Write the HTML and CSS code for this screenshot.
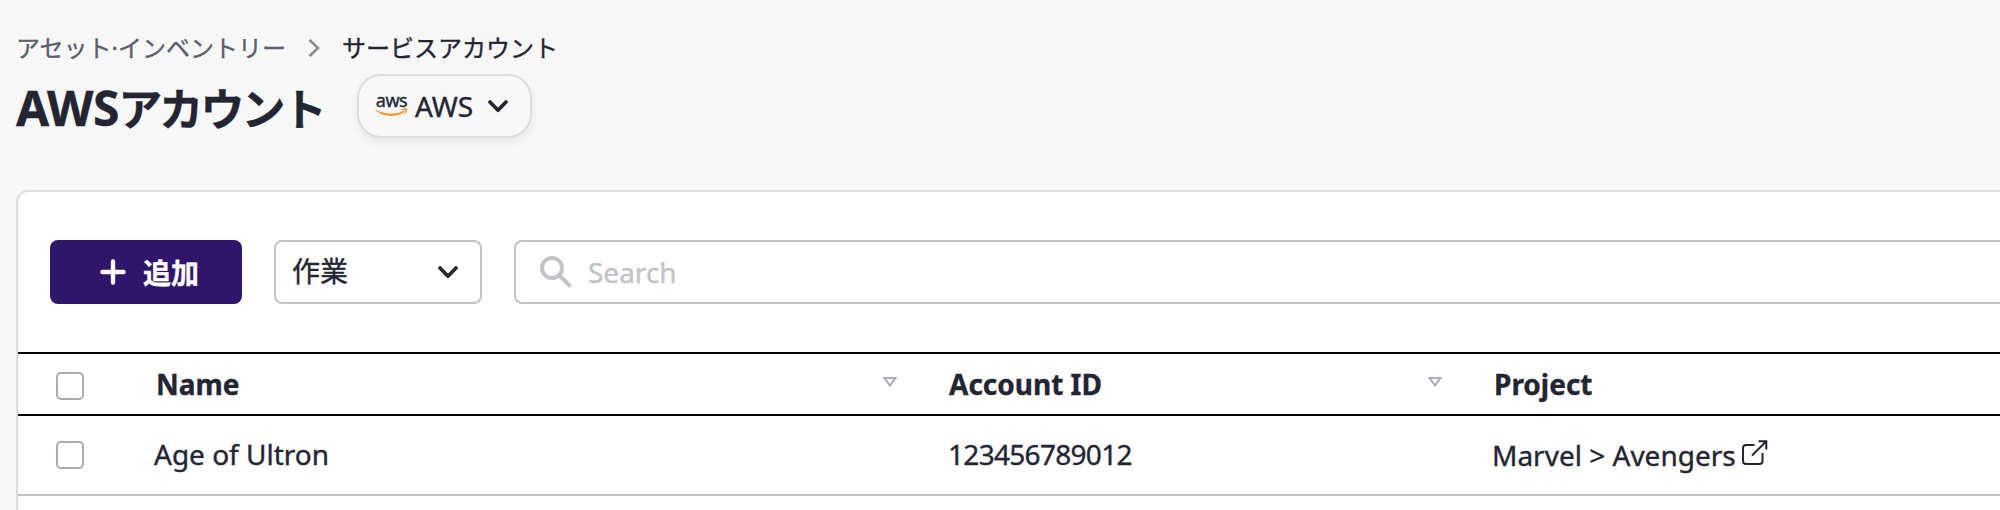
FILE: index.html
```html
<!DOCTYPE html>
<html lang="ja">
<head>
<meta charset="utf-8">
<title>AWSアカウント</title>
<link rel="stylesheet" href="styles.css">
</head>
<body>
<main class="page">
  <nav class="breadcrumb">
    <span class="crumb">アセット·インベントリー</span>
    <svg class="crumb-arrow" width="12" height="18" viewBox="0 0 12 18"><path d="M1.500 1l8.500 8-8.500 8"/></svg>
    <span class="crumb current">サービスアカウント</span>
  </nav>
  <header class="heading">
    <h1 class="title"><span class="title-latin">AWS</span><span class="title-kana">アカウント</span></h1>
    <button class="provider">
      <span class="aws-logo">
        <span class="aws-word">aws</span>
        <svg class="aws-smile" width="33" height="9" viewBox="0 0 33 9"><path d="M.4 1.500Q8 5.500 15.500 5.700 22.500 5.800 28.200 3.100 29.600 2.500 29.800 3.700 24 8 15.600 8 7 8 .4 2.300Z"/><path d="M26 1.300Q31.500-.6 32.400 1 32.500 4 29.800 6.700 29.200 6.800 29.400 6.200 30.800 3 30.300 2.100 29.300 1.500 26 1.900Z"/></svg>
      </span>
      <span class="provider-name">AWS</span>
      <svg class="chevron" width="20" height="13" viewBox="0 0 20 13"><path d="M2 2l8 8.300L18 2"/></svg>
    </button>
  </header>
  <section class="card">
    <div class="toolbar">
      <button class="add"><svg class="plus" width="26" height="26" viewBox="0 0 26 26"><path d="M13 2.500v21M2.500 13h21"/></svg><span>追加</span></button>
      <button class="select"><span class="select-label">作業</span><svg class="chevron" width="20" height="13" viewBox="0 0 20 13"><path d="M2 2l8 8.300L18 2"/></svg></button>
      <div class="search"><svg class="search-icon" width="32" height="32" viewBox="0 0 32 32"><circle cx="12" cy="12" r="10"/><path d="M19 19l11.500 11.500"/></svg><span class="placeholder">Search</span></div>
    </div>
    <div class="row head">
      <div class="check-cell"><span class="checkbox"></span></div>
      <div class="cell"><span>Name</span><svg class="sort" width="14" height="10" viewBox="0 0 14 10"><path d="M1.500 1h11L7 8.500z"/></svg></div>
      <div class="cell"><span>Account ID</span><svg class="sort" width="14" height="10" viewBox="0 0 14 10"><path d="M1.500 1h11L7 8.500z"/></svg></div>
      <div class="cell"><span>Project</span></div>
    </div>
    <div class="row body">
      <div class="check-cell"><span class="checkbox"></span></div>
      <div class="cell"><span class="value">Age of Ultron</span></div>
      <div class="cell"><span class="value account-id">123456789012</span></div>
      <div class="cell"><span>Marvel &gt; Avengers</span><svg class="external" width="26" height="26" viewBox="0 0 26 26"><path d="M12.500 4.900H4Q1 4.900 1 7.900V21Q1 24 4 24H17.500Q20.500 24 20.500 21V13"/><path d="M10 15.500L24 1.500M16.500 1.200H24.300V9.500"/></svg></div>
    </div>
  </section>
</main>
</body>
</html>
```
FILE: styles.css
```css
* { box-sizing: border-box; }
body {
  margin: 0;
  background: #f7f7f7;
  color: #232533;
  font-family: "Noto Sans", "Noto Sans CJK JP", sans-serif;
  font-size: 28px;
  -webkit-text-stroke: .35px;
}
button { margin: 0; font: inherit; color: inherit; }
svg { display: block; flex: none; fill: none; }
.page { height: 510px; padding: 30px 0 0 16px; overflow: hidden; }
.breadcrumb { display: flex; align-items: center; height: 36px; font-size: 24px; line-height: 36px; white-space: nowrap; }
.crumb { color: #5b5d70; }
.crumb.current { color: #232533; }
.crumb-arrow { margin: 0 22px; stroke: #898995; stroke-width: 2.6; }
.heading { display: flex; align-items: center; height: 64px; margin-top: 8px; }
.title { display: flex; align-items: baseline; width: 341px; margin: 0; padding-top: 4px; font-size: 48px; line-height: 64px; font-weight: 700; white-space: nowrap; }
.title-latin { letter-spacing: -.3px; }
.title-kana { margin-left: -1px; font-size: 44px; letter-spacing: -2.9px; }
.provider {
  display: flex;
  align-items: center;
  width: 175px;
  height: 64px;
  padding: 0 16px;
  border: 2px solid #dddddf;
  border-radius: 24px;
  background: #f7f7f7;
  box-shadow: 0 4px 8px rgba(0, 0, 0, .07);
}
.aws-logo { display: flex; flex-direction: column; align-items: center; width: 33px; height: 26px; }
.aws-word { height: 15px; font-size: 18px; line-height: 14px; letter-spacing: -.5px; }
.aws-smile { fill: #f79a2d; }
.provider-name { margin: 0 15px 0 7px; }
.chevron { stroke: #232533; stroke-width: 3.6; stroke-linecap: round; stroke-linejoin: round; }
.card {
  height: 320px;
  margin-top: 52px;
  border: 2px solid #dddddf;
  border-width: 2px 0 0 2px;
  border-radius: 12px 0 0 0;
  background: #fff;
}
.toolbar { display: flex; gap: 32px; padding: 48px 0 48px 32px; }
.add, .select, .search { display: flex; align-items: center; height: 64px; border-radius: 8px; }
.add { justify-content: center; gap: 17px; width: 192px; padding: 0 0 0 7px; border: 0; background: #30166b; color: #fff; font-weight: 700; }
.plus { stroke: #fff; stroke-width: 4.4; stroke-linecap: round; }
.select { justify-content: space-between; width: 208px; padding: 0 22px 0 16px; border: 2px solid #c2c2c7; background: #fff; }
.select-label { padding-bottom: 4px; }
.search { flex: 1; gap: 16px; padding: 0 0 0 24px; border: 2px solid #c2c2c7; border-right: 0; border-radius: 8px 0 0 8px; }
.search-icon { stroke: #c2c2c7; stroke-width: 4; }
.placeholder { color: #c2c2c7; }
.row { display: grid; grid-template-columns: 104px 793px 545px 1fr; white-space: nowrap; }
.head { height: 64px; border-top: 2px solid #000; border-bottom: 2px solid #000; font-weight: 700; }
.body { height: 80px; border-bottom: 2px solid #c2c2c7; }
.check-cell, .cell { display: flex; align-items: center; }
.check-cell { padding-left: 38px; }
.head .check-cell { padding-top: 4px; }
.checkbox { width: 28px; height: 28px; border: 2px solid #aaaab2; border-radius: 5px; background: #fff; }
.cell { padding-left: 32px; }
.head .cell { justify-content: space-between; padding: 0 18px 0 34px; }
.sort { margin-top: -4px; stroke: #a9abb6; stroke-width: 2; }
.value { padding-bottom: 2px; }
.account-id { padding-left: 1px; letter-spacing: -.7px; }
.external { margin: -4px 0 0 6px; stroke: #232533; stroke-width: 2; }
```
